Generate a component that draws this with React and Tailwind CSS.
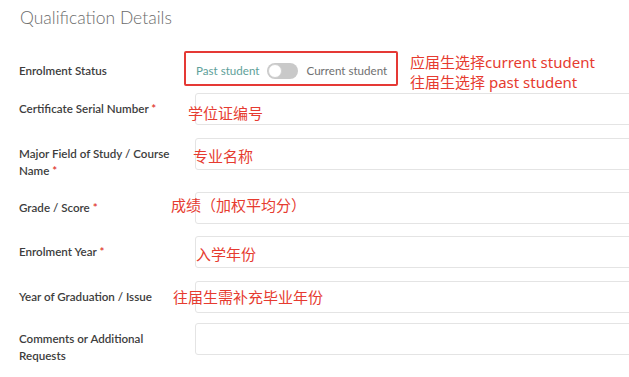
import React from "react";

const labelFont = { fontFamily: "Lato, 'Noto Sans', sans-serif" };

function Note({ children, className }) {
  return (
    <div
      className={"absolute whitespace-nowrap text-[15px] leading-[20px] text-[#e63b30] " + className}
      style={{ fontFamily: "'Noto Sans', 'Noto Sans CJK SC', sans-serif" }}
    >
      {children}
    </div>
  );
}

function Row({ label, required, note, noteClass, className }) {
  return (
    <div className={"relative flex items-start pl-[19px] " + className}>
      <div
        className="w-[176px] shrink-0 pt-[7px] pr-[18px] text-[11.6px] leading-[17px] font-semibold text-[#3d3d3d]"
        style={labelFont}
      >
        {label}
        {required && <span className="text-[#e0342b]">&nbsp;*</span>}
      </div>
      <div className="h-[32px] flex-1 -mr-[10px] rounded-[3px] border border-[#e4e4e4] bg-white" />
      {note && <Note className={noteClass}>{note}</Note>}
    </div>
  );
}

export default function App() {
  return (
    <div className="w-[629px] h-[377px] overflow-hidden bg-white">
      <div
        className="pl-[20px] pt-[6px] text-[17.5px] leading-[24px] font-light text-[#6b6b6b]"
        style={labelFont}
      >
        Qualification Details
      </div>

      <div className="mt-[21px] flex h-[35px] items-start pl-[19px]">
        <div
          className="w-[165px] shrink-0 pt-[11px] text-[11.6px] leading-[17px] font-semibold text-[#3d3d3d]"
          style={labelFont}
        >
          Enrolment Status
        </div>
        <div className="flex h-[35px] w-[214px] shrink-0 items-center rounded-[2px] border-2 border-[#e53935] pl-[10px] pt-[4px]">
          <span className="text-[11.6px] text-[#5e9f99]" style={labelFont}>
            Past student
          </span>
          <span className="ml-[8px] flex h-[16px] w-[31px] items-center rounded-full bg-[#c9c9c9] px-[1px]">
            <span className="h-[14px] w-[14px] rounded-full border border-[#d0d0d0] bg-white" />
          </span>
          <span className="ml-[8px] text-[11.6px] text-[#6f6f6f]" style={labelFont}>
            Current student
          </span>
        </div>
        <div
          className="ml-[12px] pt-[1px] text-[15px] leading-[20px] text-[#e63b30] whitespace-nowrap"
          style={{ fontFamily: "'Noto Sans', 'Noto Sans CJK SC', sans-serif" }}
        >
          <div>应届生选择current student</div>
          <div>往届生选择 past student</div>
        </div>
      </div>

      <Row
        className="mt-[7px]"
        label="Certificate Serial Number"
        required
        note="学位证编号"
        noteClass="left-[188px] top-[10px]"
      />
      <Row
        className="mt-[13px]"
        label="Major Field of Study / Course Name"
        required
        note="专业名称"
        noteClass="left-[193px] top-[8px]"
      />
      <Row
        className="mt-[13px]"
        label="Grade / Score"
        required
        note="成绩（加权平均分）"
        noteClass="left-[171px] top-[3px]"
      />
      <Row
        className="mt-[12px]"
        label="Enrolment Year"
        required
        note="入学年份"
        noteClass="left-[196px] top-[8px]"
      />
      <Row
        className="mt-[13px]"
        label="Year of Graduation / Issue"
        note="往届生需补充毕业年份"
        noteClass="left-[173px] top-[6px]"
      />
      <Row className="mt-[10px]" label="Comments or Additional Requests" />
    </div>
  );
}
